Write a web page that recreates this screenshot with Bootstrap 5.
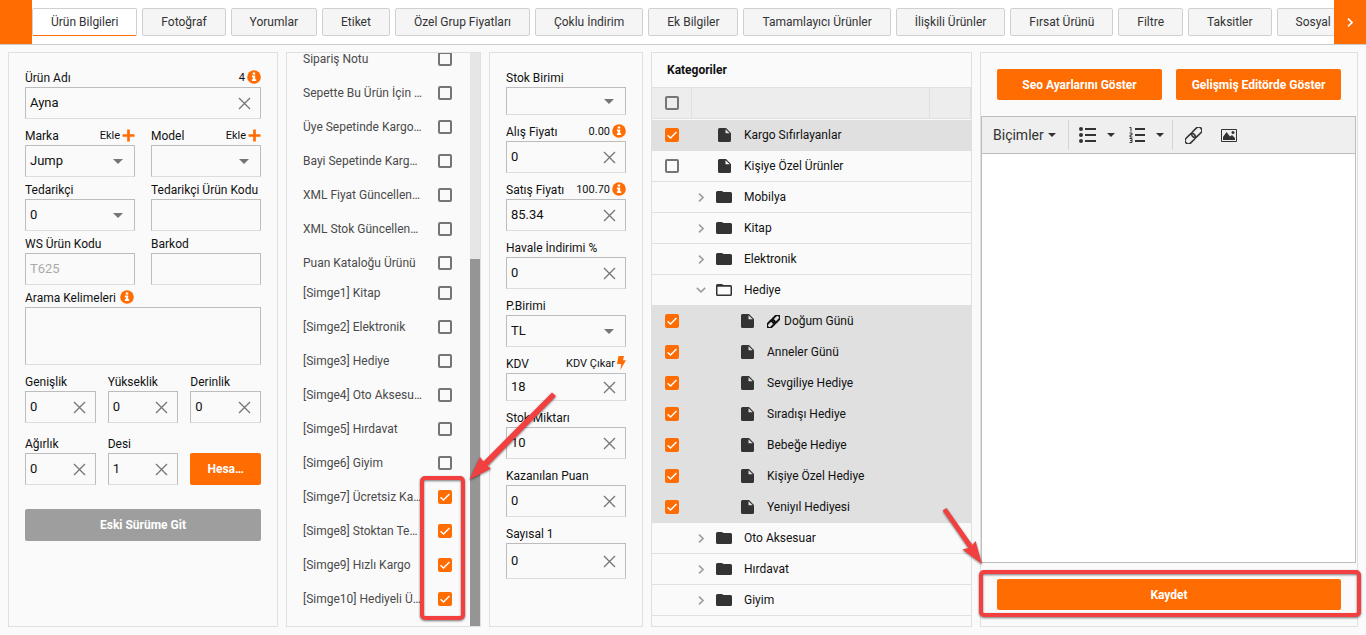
<!DOCTYPE html>
<html lang="tr">
<head>
<meta charset="utf-8">
<meta name="viewport" content="width=device-width, initial-scale=1">
<title>Ürün Bilgileri</title>
<link href="https://cdn.jsdelivr.net/npm/bootstrap@5.3.0/dist/css/bootstrap.min.css" rel="stylesheet">
<style>
:root{--brand:#ff6c02;--line:#e0e0e0;--edge:#bdbdbd;--marker:#f23f3f}
body{font-family:Roboto,"Liberation Sans",sans-serif;font-size:12px;line-height:18px;color:#111;background:#fafafa}
button{font-family:inherit}
.topbar{height:45px;border-bottom:1px solid #ccc;background:#fff}
.scroll-btn{width:32px;border:0;background:var(--brand);color:#fff;padding:0}
.tab-strip{gap:5px;overflow:hidden}
.tab-btn{height:28px;padding:0 18px;border:1px solid #d0d0d0;border-radius:2px;background:#f5f5f5;color:#333;font-size:12px;line-height:26px;white-space:nowrap;flex:none}
.tab-btn.active{background:#fff;border-bottom-color:var(--brand)}
main{gap:8px;padding:7px 8px 8px;min-height:0}
.panel{border:1px solid var(--line);min-width:0;position:relative}
.pad{padding:16px}
.w-a{flex:270 270 270px}
.w-b{flex:195 195 195px}
.w-c{flex:154 154 154px}
.w-d{flex:321 321 321px}
.w-e{flex:378 378 378px}
.fld{flex:1 1 0;min-width:0}
.trio,.pair{display:grid}
.trio{grid-template-columns:repeat(3,minmax(0,1fr));gap:12px;align-items:end}
.pair{grid-template-columns:repeat(2,minmax(0,1fr));gap:14px}
.gap-below{margin-bottom:12px}
.fld-head{height:18px;display:flex;align-items:center;justify-content:space-between;white-space:nowrap}
.hint{display:flex;align-items:center;gap:2px;font-size:11px;color:#111;text-decoration:none}
.fld-head svg{margin-bottom:2px}
.box{display:block;width:100%;height:32px;border:1px solid var(--edge);border-bottom-color:#ddd;border-radius:0;background:#fafafa;padding:0 4px 1px;font-size:13px;color:#111;line-height:18px}
.box:focus{outline:1px solid var(--brand)}
.box::placeholder{color:#aaa}
.box.low{height:28px}
.box.tall{height:36px}
textarea.box{height:58px;resize:none}
select.box{appearance:none;padding-right:28px;background:#fafafa url("data:image/svg+xml,%3Csvg xmlns='http://www.w3.org/2000/svg' width='10' height='5'%3E%3Cpath d='M0 0h10L5 5z' fill='%23757575'/%3E%3C/svg%3E") no-repeat right 11px center}
.clr{position:absolute;right:10px;top:0;bottom:0;border:0;background:none;padding:0;color:#757575;display:flex;align-items:center}
.act{height:31px;border:0;border-radius:2px;background:var(--brand);color:#fff;font-size:12px;font-weight:700;line-height:18px;padding:0 8px}
.act:hover{background:#e66000}
.act.grey{background:#9e9e9e}
.act.h32{height:32px}
.tick{appearance:none;display:block;flex:none;width:14px;height:14px;margin:0;border:2px solid #757575;border-radius:2px;background:transparent}
.tick:checked{border-color:var(--brand);background:var(--brand) url("data:image/svg+xml,%3Csvg xmlns='http://www.w3.org/2000/svg' width='10' height='10' fill='none' stroke='%23fff' stroke-width='1.5'%3E%3Cpath d='M.5 5.2 3.5 8 9.5 2'/%3E%3C/svg%3E") center no-repeat}
.opts{padding:0 18px 12px 16px;color:#4a4a4a}
.opt-group{display:flex;flex-direction:column;gap:4px}
.opt{height:30px;display:flex;align-items:center;justify-content:space-between;white-space:nowrap}
.rail{width:10px;background:#e6e6e6}
.thumb{height:64%;background:#959595}
.cat-title{height:34px;line-height:34px;padding-left:15px;font-weight:700}
.tree{width:100%;border-collapse:separate;border-spacing:0;table-layout:fixed}
.tree th{height:32px;padding:0;background:#ededed;border:solid var(--line);border-width:1px 1px 1px 0}
.tree td{height:31px;padding:0;border-top:1px solid var(--line)}
.tree tbody tr:first-child td{border-top-color:#fafafa}
.tree tr.on td{background:var(--line)}
.tree tbody tr:last-child td{border-bottom:1px solid var(--line);height:32px}
.tree .tick{margin:0 auto}
.c1{width:40px}
.c3{width:41px}
.node{display:flex;align-items:center}
.child{padding-left:23px}
.twist{width:18px;border:0;background:none;padding:0;color:#9e9e9e;display:flex;justify-content:center}
.ico{width:28px;margin-right:6px;display:flex;justify-content:center;color:#333}
.editor{border:1px solid var(--edge);margin:16px 1px 16px 0}
.tools{height:37px;background:#efefef;border-bottom:1px solid var(--edge);padding:0 11px;color:#333}
.tools button{border:0;background:none;padding:0;color:#333;font-size:14px;display:flex;align-items:center}
.tools .rule{width:1px;height:30px;background:#d5d5d5;margin:0 12px 0 8px}
.tools .rule:nth-of-type(1){margin:0 10px 0 12px}
.drop{margin-left:11px}
.num{margin-left:14px!important}
.t-pic{margin-left:19px}
.canvas{border:0;resize:none;background:#fff;outline:0}
.frame{position:absolute;border:4px solid var(--marker);border-radius:5px;filter:drop-shadow(0 1px 1px #0008);pointer-events:none;z-index:3}
.frame-a{right:15px;bottom:6px;width:45px;height:144px}
.frame-b{left:-2px;right:-4px;bottom:9px;height:47px}
.arrow{position:absolute;filter:drop-shadow(0 1px 1px #0008);pointer-events:none;z-index:3;fill:var(--marker)}
.arrow-a{left:100%;bottom:143px;margin-left:-12px}
.arrow-b{left:-39px;bottom:60px}
</style>
</head>
<body class="d-flex flex-column vh-100 overflow-hidden">
<svg class="d-none" xmlns="http://www.w3.org/2000/svg">
  <symbol id="x" viewBox="0 0 13 13"><path d="M1 1l11 11M12 1L1 12" stroke="currentColor" stroke-width="1.3" fill="none"/></symbol>
  <symbol id="info" viewBox="0 0 14 14"><circle cx="7" cy="7" r="6.8" fill="#ff6c02"/><path d="M5.7 2.400h2.500v2H5.700zM4.900 5.500h3.300v3.800h1v1.700H4.900V9.300h.9V7.200h-.9z" fill="#fff"/></symbol>
  <symbol id="plus" viewBox="0 0 13 13"><path d="M6.500.5v12M.5 6.500h12" stroke="#ff6c02" stroke-width="2.700"/></symbol>
  <symbol id="bolt" viewBox="0 0 9 14"><path d="M1.500 0h5.500L6 4.300h3L3.300 14l1-6H0z" fill="#ff6c02"/></symbol>
  <symbol id="doc" viewBox="0 0 13 14"><path fill-rule="evenodd" d="M1.500 0H8l5 5v7.500a1.500 1.500 0 0 1-1.500 1.500h-10A1.500 1.500 0 0 1 0 12.500v-11A1.500 1.500 0 0 1 1.500 0zM7.500 1.200v4.100h4.200z" fill="currentColor"/></symbol>
  <symbol id="dir" viewBox="0 0 16 12"><path d="M1.500 0H6l1.500 1h7A1.500 1.500 0 0 1 16 2.500v8a1.500 1.500 0 0 1-1.500 1.500h-13A1.500 1.500 0 0 1 0 10.500v-9A1.500 1.500 0 0 1 1.500 0z" fill="currentColor"/></symbol>
  <symbol id="dir-open" viewBox="0 0 16 12"><path fill-rule="evenodd" d="M1.500 0H6l1.500 1h7A1.500 1.500 0 0 1 16 2.500v8a1.500 1.500 0 0 1-1.500 1.500h-13A1.500 1.500 0 0 1 0 10.500v-9A1.500 1.500 0 0 1 1.500 0zM1.500 2.700v7.800h13V2.700z" fill="currentColor"/></symbol>
  <symbol id="right" viewBox="0 0 6 9"><path d="M1 .7l4 3.800-4 3.800" stroke="currentColor" stroke-width="1.600" fill="none"/></symbol>
  <symbol id="down" viewBox="0 0 10 6"><path d="M.8.8L5 4.800 9.200.8" stroke="currentColor" stroke-width="1.600" fill="none"/></symbol>
  <symbol id="caret" viewBox="0 0 8 4"><path d="M0 0h8L4 4z" fill="currentColor"/></symbol>
  <symbol id="chain" viewBox="1.500 1.500 13 13"><g transform="rotate(-45 8 8)" fill="none" stroke="currentColor"><rect x="0" y="5.500" width="9" height="5" rx="2.500"/><rect x="7" y="5.500" width="9" height="5" rx="2.500"/></g></symbol>
</svg>

<header class="topbar d-flex flex-shrink-0">
  <button class="scroll-btn flex-shrink-0" aria-label="Geri"></button>
  <nav class="tab-strip d-flex align-items-center flex-fill">
    <button class="tab-btn active">Ürün Bilgileri</button>
    <button class="tab-btn">Fotoğraf</button>
    <button class="tab-btn">Yorumlar</button>
    <button class="tab-btn">Etiket</button>
    <button class="tab-btn">Özel Grup Fiyatları</button>
    <button class="tab-btn">Çoklu İndirim</button>
    <button class="tab-btn">Ek Bilgiler</button>
    <button class="tab-btn">Tamamlayıcı Ürünler</button>
    <button class="tab-btn">İlişkili Ürünler</button>
    <button class="tab-btn">Fırsat Ürünü</button>
    <button class="tab-btn">Filtre</button>
    <button class="tab-btn">Taksitler</button>
    <button class="tab-btn">Sosyal Ağ</button>
  </nav>
  <button class="scroll-btn flex-shrink-0" aria-label="İleri"><svg width="6" height="9"><use href="#right"/></svg></button>
</header>

<main class="d-flex flex-fill">
  <section class="panel pad w-a">
    <div class="mb-2">
      <div class="fld-head"><label for="ad">Ürün Adı</label><span class="hint">4<svg width="14" height="14"><use href="#info"/></svg></span></div>
      <div class="position-relative"><input class="box" id="ad" value="Ayna"><button class="clr" aria-label="Temizle"><svg width="13" height="13"><use href="#x"/></svg></button></div>
    </div>
    <div class="d-flex gap-3 mb-1">
      <div class="fld"><div class="fld-head"><label for="marka">Marka</label><a href="#" class="hint">Ekle<svg width="13" height="13"><use href="#plus"/></svg></a></div>
        <select class="box" id="marka"><option>Jump</option></select></div>
      <div class="fld"><div class="fld-head"><label for="model">Model</label><a href="#" class="hint">Ekle<svg width="13" height="13"><use href="#plus"/></svg></a></div>
        <select class="box" id="model"><option></option></select></div>
    </div>
    <div class="d-flex gap-3 mb-1">
      <div class="fld"><div class="fld-head"><label for="ted">Tedarikçi</label></div><select class="box" id="ted"><option>0</option></select></div>
      <div class="fld"><div class="fld-head"><label for="tedkod">Tedarikçi Ürün Kodu</label></div><input class="box" id="tedkod"></div>
    </div>
    <div class="d-flex gap-3 mb-1">
      <div class="fld"><div class="fld-head"><label for="ws">WS Ürün Kodu</label></div><input class="box" id="ws" placeholder="T625"></div>
      <div class="fld"><div class="fld-head"><label for="barkod">Barkod</label></div><input class="box" id="barkod"></div>
    </div>
    <div class="mb-2">
      <div class="fld-head justify-content-start gap-1"><label for="arama">Arama Kelimeleri</label><svg width="14" height="14"><use href="#info"/></svg></div>
      <textarea class="box" id="arama"></textarea>
    </div>
    <div class="trio gap-below">
      <div><div class="fld-head"><label for="gen">Genişlik</label></div><div class="position-relative"><input class="box" id="gen" value="0"><button class="clr" aria-label="Temizle"><svg width="13" height="13"><use href="#x"/></svg></button></div></div>
      <div><div class="fld-head"><label for="yuk">Yükseklik</label></div><div class="position-relative"><input class="box" id="yuk" value="0"><button class="clr" aria-label="Temizle"><svg width="13" height="13"><use href="#x"/></svg></button></div></div>
      <div><div class="fld-head"><label for="der">Derinlik</label></div><div class="position-relative"><input class="box" id="der" value="0"><button class="clr" aria-label="Temizle"><svg width="13" height="13"><use href="#x"/></svg></button></div></div>
    </div>
    <div class="trio mb-4">
      <div><div class="fld-head"><label for="agr">Ağırlık</label></div><div class="position-relative"><input class="box" id="agr" value="0"><button class="clr" aria-label="Temizle"><svg width="13" height="13"><use href="#x"/></svg></button></div></div>
      <div><div class="fld-head"><label for="desi">Desi</label></div><div class="position-relative"><input class="box" id="desi" value="1"><button class="clr" aria-label="Temizle"><svg width="13" height="13"><use href="#x"/></svg></button></div></div>
      <button class="act h32">Hesa…</button>
    </div>
    <button class="act grey h32 w-100">Eski Sürüme Git</button>
  </section>

  <section class="panel w-b d-flex">
    <div class="opts flex-fill d-flex flex-column justify-content-end overflow-hidden">
      <div class="opt-group">
        <div class="opt"><label for="o1">Sipariş Notu</label><input type="checkbox" class="tick" id="o1"></div>
        <div class="opt"><label for="o2">Sepette Bu Ürün İçin …</label><input type="checkbox" class="tick" id="o2"></div>
        <div class="opt"><label for="o3">Üye Sepetinde Kargo…</label><input type="checkbox" class="tick" id="o3"></div>
        <div class="opt"><label for="o4">Bayi Sepetinde Karg…</label><input type="checkbox" class="tick" id="o4"></div>
        <div class="opt"><label for="o5">XML Fiyat Güncellen…</label><input type="checkbox" class="tick" id="o5"></div>
        <div class="opt"><label for="o6">XML Stok Güncellen…</label><input type="checkbox" class="tick" id="o6"></div>
        <div class="opt"><label for="o7">Puan Kataloğu Ürünü</label><input type="checkbox" class="tick" id="o7"></div>
      </div>
      <div class="opt-group">
        <div class="opt"><label for="s1">[Simge1] Kitap</label><input type="checkbox" class="tick" id="s1"></div>
        <div class="opt"><label for="s2">[Simge2] Elektronik</label><input type="checkbox" class="tick" id="s2"></div>
        <div class="opt"><label for="s3">[Simge3] Hediye</label><input type="checkbox" class="tick" id="s3"></div>
        <div class="opt"><label for="s4">[Simge4] Oto Aksesu…</label><input type="checkbox" class="tick" id="s4"></div>
        <div class="opt"><label for="s5">[Simge5] Hırdavat</label><input type="checkbox" class="tick" id="s5"></div>
        <div class="opt"><label for="s6">[Simge6] Giyim</label><input type="checkbox" class="tick" id="s6"></div>
        <div class="opt"><label for="s7">[Simge7] Ücretsiz Ka…</label><input type="checkbox" class="tick" id="s7" checked></div>
        <div class="opt"><label for="s8">[Simge8] Stoktan Te…</label><input type="checkbox" class="tick" id="s8" checked></div>
        <div class="opt"><label for="s9">[Simge9] Hızlı Kargo</label><input type="checkbox" class="tick" id="s9" checked></div>
        <div class="opt"><label for="s10">[Simge10] Hediyeli Ü…</label><input type="checkbox" class="tick" id="s10" checked></div>
      </div>
    </div>
    <div class="rail d-flex flex-column justify-content-end flex-shrink-0"><div class="thumb"></div></div>
    <div class="frame frame-a"></div>
    <svg class="arrow arrow-a" width="90" height="92" viewBox="0 0 90 92"><path d="M84 1.500l4 3.500L19.500 75l3.500 2.500L1.500 88.500 12 66l3.500 4.500z"/></svg>
  </section>

  <section class="panel pad w-c d-flex flex-column gap-2">
    <div><div class="fld-head"><label for="sb">Stok Birimi</label></div><select class="box low" id="sb"><option></option></select></div>
    <div><div class="fld-head"><label for="af">Alış Fiyatı</label><span class="hint">0.00<svg width="14" height="14"><use href="#info"/></svg></span></div><div class="position-relative"><input class="box" id="af" value="0"><button class="clr" aria-label="Temizle"><svg width="13" height="13"><use href="#x"/></svg></button></div></div>
    <div><div class="fld-head"><label for="sf">Satış Fiyatı</label><span class="hint">100.70<svg width="14" height="14"><use href="#info"/></svg></span></div><div class="position-relative"><input class="box" id="sf" value="85.34"><button class="clr" aria-label="Temizle"><svg width="13" height="13"><use href="#x"/></svg></button></div></div>
    <div><div class="fld-head"><label for="hi">Havale İndirimi %</label></div><div class="position-relative"><input class="box" id="hi" value="0"><button class="clr" aria-label="Temizle"><svg width="13" height="13"><use href="#x"/></svg></button></div></div>
    <div><div class="fld-head"><label for="pb">P.Birimi</label></div><select class="box" id="pb"><option>TL</option></select></div>
    <div><div class="fld-head"><label for="kdv">KDV</label><a href="#" class="hint">KDV Çıkar<svg width="9" height="14"><use href="#bolt"/></svg></a></div><div class="position-relative"><input class="box low" id="kdv" value="18"><button class="clr" aria-label="Temizle"><svg width="13" height="13"><use href="#x"/></svg></button></div></div>
    <div><div class="fld-head"><label for="sm">Stok Miktarı</label></div><div class="position-relative"><input class="box" id="sm" value="10"><button class="clr" aria-label="Temizle"><svg width="13" height="13"><use href="#x"/></svg></button></div></div>
    <div><div class="fld-head"><label for="kp">Kazanılan Puan</label></div><div class="position-relative"><input class="box" id="kp" value="0"><button class="clr" aria-label="Temizle"><svg width="13" height="13"><use href="#x"/></svg></button></div></div>
    <div><div class="fld-head"><label for="sy">Sayısal 1</label></div><div class="position-relative"><input class="box tall" id="sy" value="0"><button class="clr" aria-label="Temizle"><svg width="13" height="13"><use href="#x"/></svg></button></div></div>
  </section>

  <section class="panel w-d">
    <div class="cat-title">Kategoriler</div>
    <table class="tree">
      <thead><tr><th class="c1"><input type="checkbox" class="tick" aria-label="Tümünü seç"></th><th></th><th class="c3"></th></tr></thead>
      <tbody>
        <tr class="on"><td><input type="checkbox" class="tick" id="k1" checked></td><td colspan="2"><div class="node"><span class="twist"></span><span class="ico"><svg width="13" height="14"><use href="#doc"/></svg></span><label for="k1">Kargo Sıfırlayanlar</label></div></td></tr>
        <tr><td><input type="checkbox" class="tick" id="k2"></td><td colspan="2"><div class="node"><span class="twist"></span><span class="ico"><svg width="13" height="14"><use href="#doc"/></svg></span><label for="k2">Kişiye Özel Ürünler</label></div></td></tr>
        <tr><td></td><td colspan="2"><div class="node"><button class="twist" aria-label="Aç"><svg width="6" height="9"><use href="#right"/></svg></button><span class="ico"><svg width="16" height="12"><use href="#dir"/></svg></span>Mobilya</div></td></tr>
        <tr><td></td><td colspan="2"><div class="node"><button class="twist" aria-label="Aç"><svg width="6" height="9"><use href="#right"/></svg></button><span class="ico"><svg width="16" height="12"><use href="#dir"/></svg></span>Kitap</div></td></tr>
        <tr><td></td><td colspan="2"><div class="node"><button class="twist" aria-label="Aç"><svg width="6" height="9"><use href="#right"/></svg></button><span class="ico"><svg width="16" height="12"><use href="#dir"/></svg></span>Elektronik</div></td></tr>
        <tr><td></td><td colspan="2"><div class="node"><button class="twist" aria-label="Kapat"><svg width="10" height="6"><use href="#down"/></svg></button><span class="ico"><svg width="16" height="12"><use href="#dir-open"/></svg></span>Hediye</div></td></tr>
        <tr class="on"><td><input type="checkbox" class="tick" id="k3" checked></td><td colspan="2"><div class="node child"><span class="twist"></span><span class="ico"><svg width="13" height="14"><use href="#doc"/></svg></span><svg class="me-1" width="13" height="13" stroke-width="2"><use href="#chain"/></svg><label for="k3">Doğum Günü</label></div></td></tr>
        <tr class="on"><td><input type="checkbox" class="tick" id="k4" checked></td><td colspan="2"><div class="node child"><span class="twist"></span><span class="ico"><svg width="13" height="14"><use href="#doc"/></svg></span><label for="k4">Anneler Günü</label></div></td></tr>
        <tr class="on"><td><input type="checkbox" class="tick" id="k5" checked></td><td colspan="2"><div class="node child"><span class="twist"></span><span class="ico"><svg width="13" height="14"><use href="#doc"/></svg></span><label for="k5">Sevgiliye Hediye</label></div></td></tr>
        <tr class="on"><td><input type="checkbox" class="tick" id="k6" checked></td><td colspan="2"><div class="node child"><span class="twist"></span><span class="ico"><svg width="13" height="14"><use href="#doc"/></svg></span><label for="k6">Sıradışı Hediye</label></div></td></tr>
        <tr class="on"><td><input type="checkbox" class="tick" id="k7" checked></td><td colspan="2"><div class="node child"><span class="twist"></span><span class="ico"><svg width="13" height="14"><use href="#doc"/></svg></span><label for="k7">Bebeğe Hediye</label></div></td></tr>
        <tr class="on"><td><input type="checkbox" class="tick" id="k8" checked></td><td colspan="2"><div class="node child"><span class="twist"></span><span class="ico"><svg width="13" height="14"><use href="#doc"/></svg></span><label for="k8">Kişiye Özel Hediye</label></div></td></tr>
        <tr class="on"><td><input type="checkbox" class="tick" id="k9" checked></td><td colspan="2"><div class="node child"><span class="twist"></span><span class="ico"><svg width="13" height="14"><use href="#doc"/></svg></span><label for="k9">Yeniyıl Hediyesi</label></div></td></tr>
        <tr><td></td><td colspan="2"><div class="node"><button class="twist" aria-label="Aç"><svg width="6" height="9"><use href="#right"/></svg></button><span class="ico"><svg width="16" height="12"><use href="#dir"/></svg></span>Oto Aksesuar</div></td></tr>
        <tr><td></td><td colspan="2"><div class="node"><button class="twist" aria-label="Aç"><svg width="6" height="9"><use href="#right"/></svg></button><span class="ico"><svg width="16" height="12"><use href="#dir"/></svg></span>Hırdavat</div></td></tr>
        <tr><td></td><td colspan="2"><div class="node"><button class="twist" aria-label="Aç"><svg width="6" height="9"><use href="#right"/></svg></button><span class="ico"><svg width="16" height="12"><use href="#dir"/></svg></span>Giyim</div></td></tr>
      </tbody>
    </table>
  </section>

  <section class="panel w-e d-flex flex-column">
    <div class="pair px-3 pt-3">
      <button class="act">Seo Ayarlarını Göster</button>
      <button class="act">Gelişmiş Editörde Göster</button>
    </div>
    <div class="editor flex-fill d-flex flex-column">
      <div class="tools d-flex align-items-center flex-shrink-0">
        <button class="gap-1">Biçimler <svg width="8" height="4"><use href="#caret"/></svg></button>
        <span class="rule"></span>
        <button aria-label="Madde listesi"><svg width="17" height="16" viewBox="0 0 17 16"><path d="M6 2h11M6 8h11M6 14h11" stroke="currentColor" stroke-width="2"/><g fill="currentColor"><circle cx="2" cy="2" r="2"/><circle cx="2" cy="8" r="2"/><circle cx="2" cy="14" r="2"/></g></svg><svg class="drop" width="8" height="4"><use href="#caret"/></svg></button>
        <button class="num" aria-label="Numaralı liste"><svg width="16" height="16" viewBox="0 0 16 16"><path d="M6 2h10M6 8h10M6 14h10" stroke="currentColor" stroke-width="2"/><path d="M.5.500h1.500V4.500M.5 6h2.500v2H1v2h2.500M.5 11.500h2.500v4H.5M1 13.500h2" fill="none" stroke="currentColor"/></svg><svg class="drop" width="8" height="4"><use href="#caret"/></svg></button>
        <span class="rule"></span>
        <button aria-label="Bağlantı"><svg width="17" height="17" stroke-width="1.200"><use href="#chain"/></svg></button>
        <button class="t-pic" aria-label="Resim"><svg width="16" height="13" viewBox="0 0 16 13"><path d="M.5.500h15v12H.5z" fill="none" stroke="currentColor"/><path d="M2 11V8l3.500-5L9 7.500 11 6l3 3v2z" fill="currentColor"/><circle cx="12" cy="3.500" r="1.500" fill="currentColor"/></svg></button>
      </div>
      <textarea class="canvas flex-fill w-100" aria-label="Açıklama"></textarea>
    </div>
    <div class="px-3 pb-3"><button class="act w-100 d-block">Kaydet</button></div>
    <div class="frame frame-b"></div>
    <svg class="arrow arrow-b" width="44" height="60" viewBox="0 0 44 60"><path d="M.7 4.500L4.500 2l26 37 3-4L40 58 20.500 43.500l6-1.500z"/></svg>
  </section>
</main>
<script src="https://cdn.jsdelivr.net/npm/bootstrap@5.3.0/dist/js/bootstrap.bundle.min.js"></script>
</body>
</html>
